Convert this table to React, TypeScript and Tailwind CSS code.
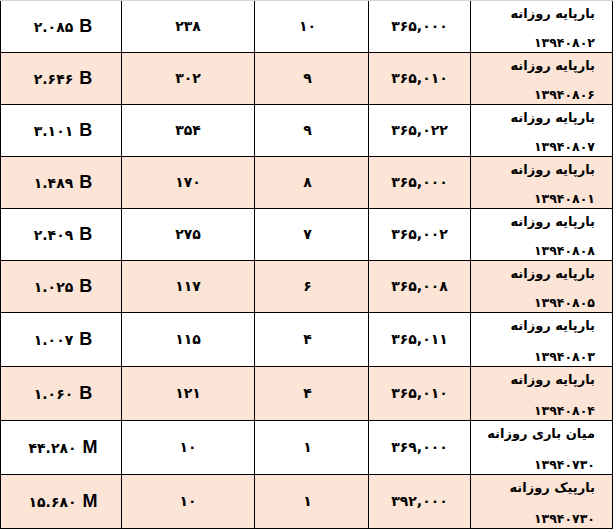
const rows = [
  { label: 'بارپایه روزانه', date: '۱۳۹۴۰۸۰۲', price: '۳۶۵,۰۰۰', count: '۱۰', num: '۲۳۸', amount: '۲.۰۸۵', unit: 'B' },
  { label: 'بارپایه روزانه', date: '۱۳۹۴۰۸۰۶', price: '۳۶۵,۰۱۰', count: '۹', num: '۳۰۲', amount: '۲.۶۴۶', unit: 'B' },
  { label: 'بارپایه روزانه', date: '۱۳۹۴۰۸۰۷', price: '۳۶۵,۰۲۲', count: '۹', num: '۳۵۴', amount: '۳.۱۰۱', unit: 'B' },
  { label: 'بارپایه روزانه', date: '۱۳۹۴۰۸۰۱', price: '۳۶۵,۰۰۰', count: '۸', num: '۱۷۰', amount: '۱.۴۸۹', unit: 'B' },
  { label: 'بارپایه روزانه', date: '۱۳۹۴۰۸۰۸', price: '۳۶۵,۰۰۲', count: '۷', num: '۲۷۵', amount: '۲.۴۰۹', unit: 'B' },
  { label: 'بارپایه روزانه', date: '۱۳۹۴۰۸۰۵', price: '۳۶۵,۰۰۸', count: '۶', num: '۱۱۷', amount: '۱.۰۲۵', unit: 'B' },
  { label: 'بارپایه روزانه', date: '۱۳۹۴۰۸۰۳', price: '۳۶۵,۰۱۱', count: '۴', num: '۱۱۵', amount: '۱.۰۰۷', unit: 'B' },
  { label: 'بارپایه روزانه', date: '۱۳۹۴۰۸۰۴', price: '۳۶۵,۰۱۰', count: '۴', num: '۱۲۱', amount: '۱.۰۶۰', unit: 'B' },
  { label: 'میان باری روزانه', date: '۱۳۹۴۰۷۳۰', price: '۳۶۹,۰۰۰', count: '۱', num: '۱۰', amount: '۴۴.۲۸۰', unit: 'M' },
  { label: 'بارپیک روزانه', date: '۱۳۹۴۰۷۳۰', price: '۳۹۲,۰۰۰', count: '۱', num: '۱۰', amount: '۱۵.۶۸۰', unit: 'M' },
];

export default function App() {
  return (
    <div
      dir="rtl"
      className="w-[613px] bg-white text-black border-t border-[#d4d4d4] font-['DejaVu_Sans',sans-serif]"
    >
      {rows.map((r, i) => (
        <div
          key={i}
          className={`grid grid-cols-[142px_102px_114px_133px_121px] border-r border-b border-black ${
            i < 6 ? 'h-[52px]' : 'h-[54px]'
          } ${i % 2 === 1 ? 'bg-[#fce4d6]' : 'bg-white'}`}
        >
          {/* label + date */}
          <div className="border-l border-black flex flex-col justify-between items-start pr-[17px] pt-[4px] text-[13px] font-bold leading-[18px]">
            <span>{r.label}</span>
            <span className="text-[12.5px] tracking-[-1.2px]">{r.date}</span>
          </div>
          <div className="border-l border-black flex items-center justify-center text-[14px] font-bold tracking-[-0.5px]">
            {r.price}
          </div>
          <div className="border-l border-black flex items-center justify-center pr-[8px] text-[14px] font-bold">
            {r.count}
          </div>
          <div className="border-l border-black flex items-center justify-center text-[14px] font-bold">
            {r.num}
          </div>
          <div className="border-l border-black flex items-center justify-center">
            <span dir="ltr" className="flex items-baseline gap-[6px] pl-[4px]">
              <span className="text-[14px] font-bold tracking-[-0.5px]">{r.amount}</span>
              <span className="font-['Liberation_Sans',Arial,sans-serif] text-[18px] font-bold">{r.unit}</span>
            </span>
          </div>
        </div>
      ))}
    </div>
  );
}
